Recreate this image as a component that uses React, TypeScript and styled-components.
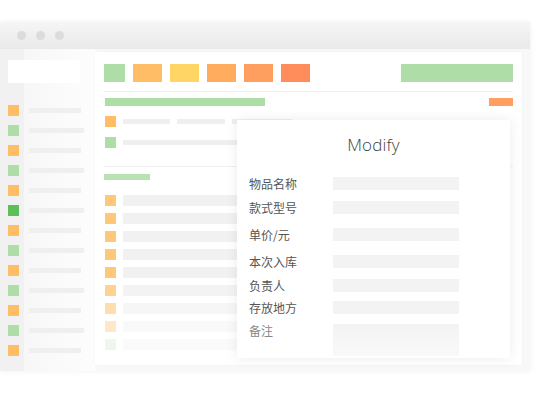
import React from 'react';
import styled, { createGlobalStyle } from 'styled-components';

const GlobalStyle = createGlobalStyle`
  html, body {
    margin: 0;
    padding: 0;
    background: #fff;
    font-family: "Noto Sans", "Noto Sans CJK SC", sans-serif;
  }
`;

const sideItems = ['o', 'g', 'o', 'g', 'o', 'd', 'o', 'g', 'o', 'g', 'o', 'g', 'o'];
const tableRows = [1, 1, 1, 1, 1, 0.8, 0.6, 0.4, 0.3];

const fields = [
  { label: '物品名称', top: 0 },
  { label: '款式型号', top: 11 },
  { label: '单价/元', top: 14 },
  { label: '本次入库', top: 14 },
  { label: '负责人', top: 11 },
  { label: '存放地方', top: 9 },
];

const colors: Record<string, string> = {
  o: '#ffbd66',
  g: '#aedda8',
  d: '#5cbf5a',
};

const App = () => {
  return (
    <>
      <GlobalStyle />
      <Page>
        <Window>
          <TitleBar>
            <Dot />
            <Dot />
            <Dot />
          </TitleBar>
          <WindowBody>
            <Sidebar>
              <SearchBox />
              <SideList>
                {sideItems.map((c, i) => (
                  <SideItem key={i}>
                    <Square $color={colors[c]} />
                    <SideLine $width={c === 'o' ? 52 : 55} />
                  </SideItem>
                ))}
              </SideList>
            </Sidebar>
            <Main>
              <Toolbar>
                <Block $w={21} $color="#aedda8" />
                <Block $w={29} $color="#ffbd66" />
                <Block $w={29} $color="#ffd666" />
                <Block $w={29} $color="#ffac5e" />
                <Block $w={29} $color="#ff9f5f" />
                <Block $w={29} $color="#ff8d5b" />
                <Spacer />
                <Block $w={112} $color="#aedda8" />
              </Toolbar>
              <Divider />
              <HeadRow>
                <Bar $w={160} $h={8} $color="#aedda8" />
                <Bar $w={24} $h={8} $color="#ff9f5f" />
              </HeadRow>
              <DataRow $top={10}>
                <Square $color="#ffbd66" />
                <GrayLine $w={47} />
                <GrayLine $w={48} />
                <GrayLine $w={60} />
              </DataRow>
              <DataRow $top={10}>
                <Square $color="#aedda8" />
                <GrayLine $w={200} />
              </DataRow>
              <Divider $top={18} />
              <SmallBar />
              <TableList>
                {tableRows.map((op, i) => (
                  <TableRow key={i} style={{ opacity: op }}>
                    <Square $color={i === tableRows.length - 1 ? '#c6e8bf' : '#ffc878'} />
                    <TableBar />
                  </TableRow>
                ))}
              </TableList>
            </Main>
          </WindowBody>
          <Modal>
            <ModalTitle>Modify</ModalTitle>
            <Form>
              {fields.map((f) => (
                <FieldRow key={f.label} $top={f.top}>
                  <Label>{f.label}</Label>
                  <Input />
                </FieldRow>
              ))}
              <FieldRow $top={10} $align="flex-start">
                <Label $muted>备注</Label>
                <TextArea />
              </FieldRow>
            </Form>
          </Modal>
        </Window>
      </Page>
    </>
  );
};

export default App;

// Styled Components
const Page = styled.div`
  width: 545px;
  height: 417px;
  padding-top: 22px;
  box-sizing: border-box;
`;

const Window = styled.div`
  position: relative;
  width: 530px;
  height: 349px;
  background: #f8f8f8;
  box-shadow: 0 0 6px rgba(0, 0, 0, 0.06);
  display: flex;
  flex-direction: column;
`;

const TitleBar = styled.div`
  height: 27px;
  display: flex;
  align-items: center;
  gap: 10px;
  padding-left: 17px;
  background: linear-gradient(to bottom, #f6f6f6, #e9e9e9);
`;

const Dot = styled.span`
  width: 9px;
  height: 9px;
  border-radius: 50%;
  background: #dcdcdc;
`;

const WindowBody = styled.div`
  flex: 1;
  display: flex;
`;

const Sidebar = styled.div`
  width: 95px;
  padding: 11px 0 0 8px;
  box-sizing: border-box;
  background: linear-gradient(to right, #f1f1f1 0, #f1f1f1 24px, #f7f7f7 24px, #fdfdfd 95px);
`;

const SearchBox = styled.div`
  width: 72px;
  height: 23px;
  background: #fff;
`;

const SideList = styled.div`
  margin-top: 22px;
  display: flex;
  flex-direction: column;
  gap: 9px;
`;

const SideItem = styled.div`
  display: flex;
  align-items: center;
  gap: 10px;
`;

const Square = styled.span<{ $color: string }>`
  width: 11px;
  height: 11px;
  flex: none;
  background: ${(p) => p.$color};
`;

const SideLine = styled.span<{ $width: number }>`
  width: ${(p) => p.$width}px;
  height: 5px;
  background: #efefef;
  filter: blur(0.6px);
`;

const Main = styled.div`
  width: 427px;
  height: 313px;
  margin-top: 3px;
  padding: 12px 9px 0 9px;
  box-sizing: border-box;
  background: #fff;
  box-shadow: 0 0 4px rgba(0, 0, 0, 0.03);
  display: flex;
  flex-direction: column;
`;

const Toolbar = styled.div`
  display: flex;
  gap: 8px;
  height: 18px;
`;

const Block = styled.span<{ $w: number; $color: string }>`
  width: ${(p) => p.$w}px;
  height: 18px;
  background: ${(p) => p.$color};
`;

const Spacer = styled.span`
  flex: 1;
`;

const Divider = styled.div<{ $top?: number }>`
  height: 1px;
  background: #f0f0f0;
  margin-top: ${(p) => p.$top ?? 9}px;
`;

const HeadRow = styled.div`
  display: flex;
  justify-content: space-between;
  margin-top: 6px;
  padding-left: 1px;
`;

const Bar = styled.span<{ $w: number; $h: number; $color: string }>`
  display: block;
  width: ${(p) => p.$w}px;
  height: ${(p) => p.$h}px;
  background: ${(p) => p.$color};
`;

const SmallBar = styled.span`
  display: block;
  width: 46px;
  height: 6px;
  margin-top: 7px;
  background: #b8e2b2;
`;

const DataRow = styled.div<{ $top: number }>`
  display: flex;
  align-items: center;
  gap: 7px;
  margin-top: ${(p) => p.$top}px;
  padding-left: 1px;
`;

const GrayLine = styled.span<{ $w: number }>`
  width: ${(p) => p.$w}px;
  height: 5px;
  background: #efefef;
`;

const TableList = styled.div`
  margin-top: 15px;
  display: flex;
  flex-direction: column;
  gap: 7px;
`;

const TableRow = styled.div`
  display: flex;
  align-items: center;
  gap: 7px;
  padding-left: 1px;
`;

const TableBar = styled.span`
  width: 140px;
  height: 11px;
  background: #f1f1f1;
`;

const Modal = styled.div`
  position: absolute;
  left: 237px;
  top: 98px;
  width: 273px;
  height: 238px;
  background: #fff;
  box-shadow: 0 0 12px rgba(0, 0, 0, 0.08);
  padding: 14px 12px 0 12px;
  box-sizing: border-box;
`;

const ModalTitle = styled.div`
  text-align: center;
  font-family: "Open Sans", sans-serif;
  font-size: 17px;
  font-weight: 300;
  line-height: 22px;
  color: #444;
  letter-spacing: 0.2px;
`;

const Form = styled.div`
  margin-top: 21px;
  display: flex;
  flex-direction: column;
`;

const FieldRow = styled.div<{ $top: number; $align?: string }>`
  display: flex;
  align-items: ${(p) => p.$align ?? 'center'};
  margin-top: ${(p) => p.$top}px;
`;

const Label = styled.span<{ $muted?: boolean }>`
  width: 84px;
  font-family: "Noto Sans CJK SC", sans-serif;
  font-size: 12px;
  line-height: 13px;
  color: ${(p) => (p.$muted ? '#888' : '#555')};
`;

const Input = styled.span`
  width: 126px;
  height: 13px;
  background: #f3f3f3;
`;

const TextArea = styled.span`
  width: 126px;
  height: 32px;
  background: linear-gradient(to bottom, #f3f3f3, #f9f9f9);
`;
